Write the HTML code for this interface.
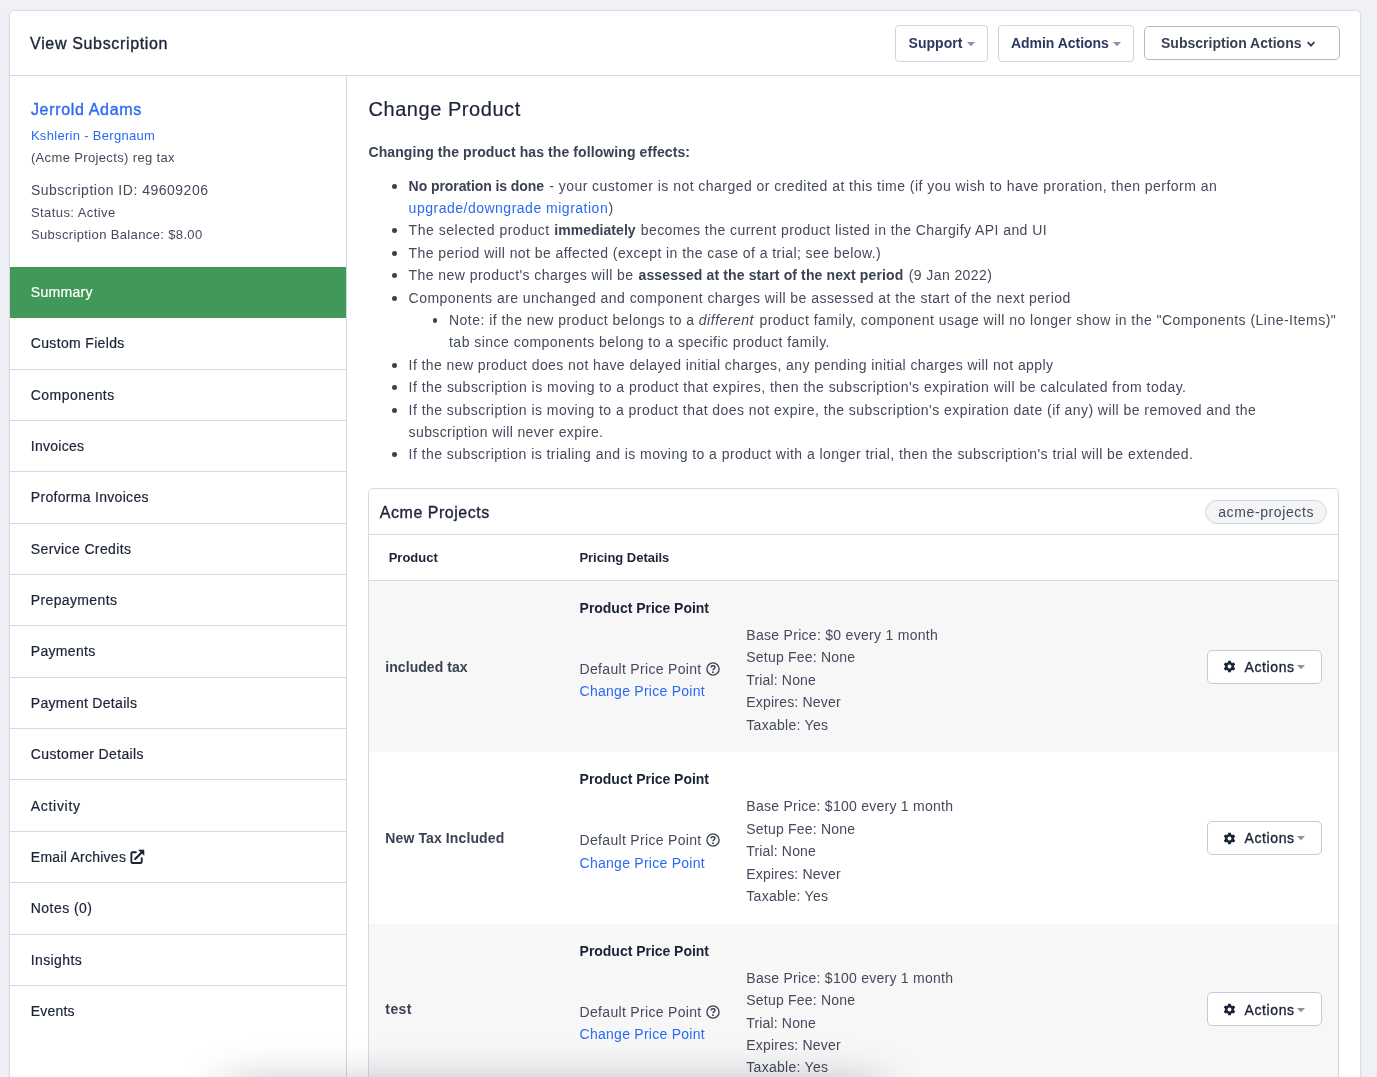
<!DOCTYPE html>
<html lang="en"><head><meta charset="utf-8"><title>View Subscription</title>
<style>
html,body{margin:0;padding:0}
html{overflow:hidden;width:1377px;height:1077px}
body{width:1377px;height:1077px;overflow:hidden;background:#eff1f6;position:relative;font-family:"Liberation Sans",sans-serif;}
.card{position:absolute;left:9px;top:10px;width:1350px;height:1090px;background:#fff;border:1px solid #d9dce4;border-radius:5px;box-shadow:0 1px 3px rgba(30,40,80,.08)}
.wrap{position:absolute;left:0;top:0;width:1377px;height:1077px;will-change:transform}
.t{position:absolute;white-space:pre;line-height:1;}
.hl{position:absolute;height:1px;background:#d6d9e0}
.vl{position:absolute;width:1px;background:#d6d9e0}
.btn{position:absolute;box-sizing:border-box;border:1px solid #cfd3de;border-radius:4px;background:#fff}
.btn.dk{border-color:#b4b9c6;border-radius:5px}
.btn.r5{border-radius:5px;border-color:#c6cad4}
.caret{position:absolute;width:0;height:0;border-left:3.7px solid transparent;border-right:3.7px solid transparent;border-top:4px solid #8b92a6}
.ic{position:absolute;overflow:visible}
.green{position:absolute;background:#409959}
.dot{position:absolute;width:4.7px;height:4.7px;border-radius:50%;background:#3a4152}
.panel{position:absolute;left:368px;top:488px;width:969px;height:640px;border:1px solid #d6d9e2;border-radius:5px;background:#fff}
.row{position:absolute;left:369px;width:969px}
.row.g{background:#f7f7f8}
.badge{position:absolute;box-sizing:border-box;border:1px solid #d3d6de;border-radius:12px;background:#f3f4f6}
.shadow{position:absolute;left:232px;top:1098px;width:640px;height:30px;border-radius:8px;background:#fff;box-shadow:0 0 45px 10px rgba(20,25,40,.36)}
</style></head>
<body>
<div class="card"></div>
<div class="hl" style="left:10px;top:75px;width:1350px"></div>
<div class="vl" style="left:346px;top:76px;height:1010px"></div>
<div class="wrap">
<span class="t" style="left:30.10px;top:36px;font-size:16px;color:#1b2337;letter-spacing:0.657px;-webkit-text-stroke:0.35px #1b2337;">View Subscription</span>
<div class="btn" style="left:895px;top:25px;width:93px;height:37px"></div>
<div class="btn" style="left:998px;top:25px;width:136px;height:37px"></div>
<div class="btn dk" style="left:1144px;top:26px;width:196px;height:34px"></div>
<span class="t" style="left:908.60px;top:36px;font-size:14px;color:#2c3860;letter-spacing:0.024px;font-weight:700;">Support</span>
<span class="t" style="left:1011.00px;top:36px;font-size:14px;color:#2c3860;letter-spacing:-0.039px;font-weight:700;">Admin Actions</span>
<span class="t" style="left:1161.00px;top:36px;font-size:14px;color:#3a4152;letter-spacing:0.012px;font-weight:700;">Subscription Actions</span>
<svg class="ic" style="left:967.00px;top:41.80px" width="8" height="4.2" viewBox="0 0 8 4.2"><path d="M0 0 H8 L4 4.2 Z" fill="#8b92a6"/></svg>
<svg class="ic" style="left:1113.20px;top:41.80px" width="8" height="4.2" viewBox="0 0 8 4.2"><path d="M0 0 H8 L4 4.2 Z" fill="#8b92a6"/></svg>
<svg class="ic" style="left:1306px;top:39.5px" width="10" height="8" viewBox="0 0 10 8"><path d="M1.6 2.2 L5 5.6 L8.4 2.2" fill="none" stroke="#3a4152" stroke-width="1.9"/></svg>
<span class="t" style="left:30.90px;top:102px;font-size:16px;color:#2a6af0;letter-spacing:0.670px;-webkit-text-stroke:0.35px #2a6af0;">Jerrold Adams</span>
<span class="t" style="left:30.90px;top:129px;font-size:13px;color:#2a6af0;letter-spacing:0.306px;">Kshlerin - Bergnaum</span>
<span class="t" style="left:30.90px;top:151px;font-size:13px;color:#434a5b;letter-spacing:0.359px;">(Acme Projects) reg tax</span>
<span class="t" style="left:30.90px;top:183px;font-size:14px;color:#434a5b;letter-spacing:0.504px;">Subscription ID: 49609206</span>
<span class="t" style="left:30.90px;top:206px;font-size:13px;color:#434a5b;letter-spacing:0.433px;">Status: Active</span>
<span class="t" style="left:30.90px;top:228px;font-size:13px;color:#434a5b;letter-spacing:0.362px;">Subscription Balance: $8.00</span>
<div class="green" style="left:10px;top:267px;width:336px;height:51px"></div>
<span class="t" style="left:30.80px;top:285px;font-size:14px;color:#ffffff;letter-spacing:0.302px;-webkit-text-stroke:0.2px #ffffff;">Summary</span>
<div class="hl" style="left:10px;top:369px;width:336px"></div>
<span class="t" style="left:30.80px;top:336px;font-size:14px;color:#1b2337;letter-spacing:0.336px;-webkit-text-stroke:0.2px #1b2337;">Custom Fields</span>
<div class="hl" style="left:10px;top:420px;width:336px"></div>
<span class="t" style="left:30.80px;top:388px;font-size:14px;color:#1b2337;letter-spacing:0.447px;-webkit-text-stroke:0.2px #1b2337;">Components</span>
<div class="hl" style="left:10px;top:471px;width:336px"></div>
<span class="t" style="left:30.80px;top:439px;font-size:14px;color:#1b2337;letter-spacing:0.277px;-webkit-text-stroke:0.2px #1b2337;">Invoices</span>
<div class="hl" style="left:10px;top:523px;width:336px"></div>
<span class="t" style="left:30.80px;top:490px;font-size:14px;color:#1b2337;letter-spacing:0.304px;-webkit-text-stroke:0.2px #1b2337;">Proforma Invoices</span>
<div class="hl" style="left:10px;top:574px;width:336px"></div>
<span class="t" style="left:30.80px;top:542px;font-size:14px;color:#1b2337;letter-spacing:0.377px;-webkit-text-stroke:0.2px #1b2337;">Service Credits</span>
<div class="hl" style="left:10px;top:625px;width:336px"></div>
<span class="t" style="left:30.80px;top:593px;font-size:14px;color:#1b2337;letter-spacing:0.362px;-webkit-text-stroke:0.2px #1b2337;">Prepayments</span>
<div class="hl" style="left:10px;top:677px;width:336px"></div>
<span class="t" style="left:30.80px;top:644px;font-size:14px;color:#1b2337;letter-spacing:0.307px;-webkit-text-stroke:0.2px #1b2337;">Payments</span>
<div class="hl" style="left:10px;top:728px;width:336px"></div>
<span class="t" style="left:30.80px;top:696px;font-size:14px;color:#1b2337;letter-spacing:0.304px;-webkit-text-stroke:0.2px #1b2337;">Payment Details</span>
<div class="hl" style="left:10px;top:779px;width:336px"></div>
<span class="t" style="left:30.80px;top:747px;font-size:14px;color:#1b2337;letter-spacing:0.356px;-webkit-text-stroke:0.2px #1b2337;">Customer Details</span>
<div class="hl" style="left:10px;top:831px;width:336px"></div>
<span class="t" style="left:30.80px;top:799px;font-size:14px;color:#1b2337;letter-spacing:0.694px;-webkit-text-stroke:0.2px #1b2337;">Activity</span>
<div class="hl" style="left:10px;top:882px;width:336px"></div>
<span class="t" style="left:30.80px;top:850px;font-size:14px;color:#1b2337;letter-spacing:0.253px;-webkit-text-stroke:0.2px #1b2337;">Email Archives</span>
<div class="hl" style="left:10px;top:934px;width:336px"></div>
<span class="t" style="left:30.80px;top:901px;font-size:14px;color:#1b2337;letter-spacing:0.440px;-webkit-text-stroke:0.2px #1b2337;">Notes (0)</span>
<div class="hl" style="left:10px;top:985px;width:336px"></div>
<span class="t" style="left:30.80px;top:953px;font-size:14px;color:#1b2337;letter-spacing:0.379px;-webkit-text-stroke:0.2px #1b2337;">Insights</span>
<span class="t" style="left:30.80px;top:1004px;font-size:14px;color:#1b2337;letter-spacing:0.181px;-webkit-text-stroke:0.2px #1b2337;">Events</span>
<svg class="ic" style="left:129.6px;top:849.2px" width="15.2" height="15.2" viewBox="0 0 15.2 15.2"><path d="M5.9 3.25 H2.6 Q1.35 3.25 1.35 4.5 V12.7 Q1.35 13.95 2.6 13.95 H10.5 Q11.75 13.95 11.75 12.7 V9.2" fill="none" stroke="#1b2337" stroke-width="1.9" stroke-linecap="round"/><path d="M5.2 10.0 L11.9 3.2" fill="none" stroke="#1b2337" stroke-width="2.2" stroke-linecap="round"/><path d="M8.7 1.0 H14.0 V6.3 Z" fill="#1b2337" stroke="#1b2337" stroke-width="0.6" stroke-linejoin="round"/></svg>
<span class="t" style="left:368.50px;top:99px;font-size:20px;color:#1b2337;letter-spacing:0.550px;-webkit-text-stroke:0.2px #1b2337;">Change Product</span>
<span class="t" style="left:368.50px;top:145px;font-size:14px;color:#3a4152;letter-spacing:0.091px;font-weight:700;">Changing the product has the following effects:</span>
<div class="dot" style="left:392.15px;top:184.25px"></div>
<span class="t" style="left:408.60px;top:179px;font-size:14px;color:#3a4152;letter-spacing:-0.073px;font-weight:700;">No proration is done</span>
<span class="t" style="left:549.20px;top:179px;font-size:14px;color:#434a5b;letter-spacing:0.464px;">- your customer is not charged or credited at this time (if you wish to have proration, then perform an</span>
<span class="t" style="left:408.60px;top:201px;font-size:14px;color:#2a6af0;letter-spacing:0.503px;">upgrade/downgrade migration</span>
<span class="t" style="left:608.40px;top:201px;font-size:14px;color:#434a5b;letter-spacing:0.000px;">)</span>
<div class="dot" style="left:392.15px;top:228.25px"></div>
<span class="t" style="left:408.60px;top:223px;font-size:14px;color:#434a5b;letter-spacing:0.518px;">The selected product</span>
<span class="t" style="left:554.30px;top:223px;font-size:14px;color:#3a4152;letter-spacing:0.038px;font-weight:700;">immediately</span>
<span class="t" style="left:640.70px;top:223px;font-size:14px;color:#434a5b;letter-spacing:0.436px;">becomes the current product listed in the Chargify API and UI</span>
<div class="dot" style="left:392.15px;top:251.25px"></div>
<span class="t" style="left:408.60px;top:246px;font-size:14px;color:#434a5b;letter-spacing:0.431px;">The period will not be affected (except in the case of a trial; see below.)</span>
<div class="dot" style="left:392.15px;top:273.25px"></div>
<span class="t" style="left:408.60px;top:268px;font-size:14px;color:#434a5b;letter-spacing:0.439px;">The new product's charges will be</span>
<span class="t" style="left:638.50px;top:268px;font-size:14px;color:#3a4152;letter-spacing:0.124px;font-weight:700;">assessed at the start of the next period</span>
<span class="t" style="left:908.80px;top:268px;font-size:14px;color:#434a5b;letter-spacing:0.399px;">(9 Jan 2022)</span>
<div class="dot" style="left:392.15px;top:296.25px"></div>
<span class="t" style="left:408.60px;top:291px;font-size:14px;color:#434a5b;letter-spacing:0.457px;">Components are unchanged and component charges will be assessed at the start of the next period</span>
<div class="dot" style="left:432.65px;top:318.25px"></div>
<span class="t" style="left:449.00px;top:313px;font-size:14px;color:#434a5b;letter-spacing:0.474px;">Note: if the new product belongs to a</span>
<span class="t" style="left:698.80px;top:313px;font-size:14px;color:#434a5b;letter-spacing:0.515px;font-style:italic;">different</span>
<span class="t" style="left:759.40px;top:313px;font-size:14px;color:#434a5b;letter-spacing:0.471px;">product family, component usage will no longer show in the "Components (Line-Items)"</span>
<span class="t" style="left:449.00px;top:335px;font-size:14px;color:#434a5b;letter-spacing:0.476px;">tab since components belong to a specific product family.</span>
<div class="dot" style="left:392.15px;top:363.25px"></div>
<span class="t" style="left:408.60px;top:358px;font-size:14px;color:#434a5b;letter-spacing:0.417px;">If the new product does not have delayed initial charges, any pending initial charges will not apply</span>
<div class="dot" style="left:392.15px;top:385.25px"></div>
<span class="t" style="left:408.60px;top:380px;font-size:14px;color:#434a5b;letter-spacing:0.469px;">If the subscription is moving to a product that expires, then the subscription's expiration will be calculated from today.</span>
<div class="dot" style="left:392.15px;top:408.25px"></div>
<span class="t" style="left:408.60px;top:403px;font-size:14px;color:#434a5b;letter-spacing:0.459px;">If the subscription is moving to a product that does not expire, the subscription's expiration date (if any) will be removed and the</span>
<span class="t" style="left:408.60px;top:425px;font-size:14px;color:#434a5b;letter-spacing:0.385px;">subscription will never expire.</span>
<div class="dot" style="left:392.15px;top:452.25px"></div>
<span class="t" style="left:408.60px;top:447px;font-size:14px;color:#434a5b;letter-spacing:0.448px;">If the subscription is trialing and is moving to a product with a longer trial, then the subscription's trial will be extended.</span>
<div class="panel"></div>
<div class="row g" style="top:581px;height:171px"></div>
<div class="row g" style="top:924px;height:160px"></div>
<div class="hl" style="left:369px;top:534px;width:969px"></div>
<div class="hl" style="left:369px;top:580px;width:969px"></div>
<span class="t" style="left:379.80px;top:505px;font-size:16px;color:#1b2337;letter-spacing:0.530px;-webkit-text-stroke:0.35px #1b2337;">Acme Projects</span>
<div class="badge" style="left:1205px;top:500px;width:122px;height:24px"></div>
<span class="t" style="left:1218.20px;top:505px;font-size:14px;color:#434a5b;letter-spacing:0.615px;">acme-projects</span>
<span class="t" style="left:388.70px;top:551px;font-size:13px;color:#1b2337;letter-spacing:-0.002px;font-weight:700;">Product</span>
<span class="t" style="left:579.40px;top:551px;font-size:13px;color:#1b2337;letter-spacing:-0.029px;font-weight:700;">Pricing Details</span>
<span class="t" style="left:579.60px;top:601px;font-size:14px;color:#1b2337;letter-spacing:-0.028px;font-weight:700;">Product Price Point</span>
<span class="t" style="left:385.30px;top:660px;font-size:14px;color:#3a4152;letter-spacing:0.056px;font-weight:700;">included tax</span>
<span class="t" style="left:579.60px;top:662px;font-size:14px;color:#434a5b;letter-spacing:0.315px;">Default Price Point</span>
<span class="t" style="left:579.60px;top:684px;font-size:14px;color:#2a6af0;letter-spacing:0.257px;">Change Price Point</span>
<svg class="ic" style="left:706.2px;top:661.70px" width="14" height="14" viewBox="0 0 14 14"><circle cx="7" cy="7" r="6.1" fill="none" stroke="#3a4152" stroke-width="1.35"/><path d="M4.95 5.55 Q5.05 3.75 7 3.75 Q8.95 3.75 8.95 5.35 Q8.95 6.3 7.9 6.9 Q7 7.4 7 8.3" fill="none" stroke="#3a4152" stroke-width="1.45"/><circle cx="7" cy="10.15" r="0.95" fill="#3a4152"/></svg>
<span class="t" style="left:746.30px;top:628px;font-size:14px;color:#434a5b;letter-spacing:0.291px;">Base Price: $0 every 1 month</span>
<span class="t" style="left:746.30px;top:650px;font-size:14px;color:#434a5b;letter-spacing:0.204px;">Setup Fee: None</span>
<span class="t" style="left:746.30px;top:673px;font-size:14px;color:#434a5b;letter-spacing:0.155px;">Trial: None</span>
<span class="t" style="left:746.30px;top:695px;font-size:14px;color:#434a5b;letter-spacing:0.191px;">Expires: Never</span>
<span class="t" style="left:746.30px;top:718px;font-size:14px;color:#434a5b;letter-spacing:0.280px;">Taxable: Yes</span>
<div class="btn r5" style="left:1207px;top:649.60px;width:115px;height:34px"></div>
<svg class="ic" style="left:1223.4px;top:660.10px" width="13" height="13" viewBox="-6.5 -6.5 13 13"><path d="M-1.50 -4.24 L-1.31 -5.86 L1.31 -5.86 L1.50 -4.24 L2.92 -3.42 L4.42 -4.06 L5.73 -1.79 L4.42 -0.82 L4.42 0.82 L5.73 1.79 L4.42 4.06 L2.92 3.42 L1.50 4.24 L1.31 5.86 L-1.31 5.86 L-1.50 4.24 L-2.92 3.42 L-4.42 4.06 L-5.73 1.79 L-4.42 0.82 L-4.42 -0.82 L-5.73 -1.79 L-4.42 -4.06 L-2.92 -3.42 Z M1.95 0 A1.95 1.95 0 1 0 -1.95 0 A1.95 1.95 0 1 0 1.95 0 Z" fill="#1b2337" fill-rule="evenodd"/></svg>
<span class="t" style="left:1244.50px;top:660px;font-size:14px;color:#1b2337;letter-spacing:0.616px;-webkit-text-stroke:0.35px #1b2337;">Actions</span>
<svg class="ic" style="left:1297.40px;top:664.80px" width="8" height="4.2" viewBox="0 0 8 4.2"><path d="M0 0 H8 L4 4.2 Z" fill="#8b92a6"/></svg>
<span class="t" style="left:579.60px;top:772px;font-size:14px;color:#1b2337;letter-spacing:-0.028px;font-weight:700;">Product Price Point</span>
<span class="t" style="left:385.30px;top:831px;font-size:14px;color:#3a4152;letter-spacing:0.113px;font-weight:700;">New Tax Included</span>
<span class="t" style="left:579.60px;top:833px;font-size:14px;color:#434a5b;letter-spacing:0.315px;">Default Price Point</span>
<span class="t" style="left:579.60px;top:856px;font-size:14px;color:#2a6af0;letter-spacing:0.257px;">Change Price Point</span>
<svg class="ic" style="left:706.2px;top:833.10px" width="14" height="14" viewBox="0 0 14 14"><circle cx="7" cy="7" r="6.1" fill="none" stroke="#3a4152" stroke-width="1.35"/><path d="M4.95 5.55 Q5.05 3.75 7 3.75 Q8.95 3.75 8.95 5.35 Q8.95 6.3 7.9 6.9 Q7 7.4 7 8.3" fill="none" stroke="#3a4152" stroke-width="1.45"/><circle cx="7" cy="10.15" r="0.95" fill="#3a4152"/></svg>
<span class="t" style="left:746.30px;top:799px;font-size:14px;color:#434a5b;letter-spacing:0.258px;">Base Price: $100 every 1 month</span>
<span class="t" style="left:746.30px;top:822px;font-size:14px;color:#434a5b;letter-spacing:0.204px;">Setup Fee: None</span>
<span class="t" style="left:746.30px;top:844px;font-size:14px;color:#434a5b;letter-spacing:0.155px;">Trial: None</span>
<span class="t" style="left:746.30px;top:867px;font-size:14px;color:#434a5b;letter-spacing:0.191px;">Expires: Never</span>
<span class="t" style="left:746.30px;top:889px;font-size:14px;color:#434a5b;letter-spacing:0.280px;">Taxable: Yes</span>
<div class="btn r5" style="left:1207px;top:821.00px;width:115px;height:34px"></div>
<svg class="ic" style="left:1223.4px;top:831.50px" width="13" height="13" viewBox="-6.5 -6.5 13 13"><path d="M-1.50 -4.24 L-1.31 -5.86 L1.31 -5.86 L1.50 -4.24 L2.92 -3.42 L4.42 -4.06 L5.73 -1.79 L4.42 -0.82 L4.42 0.82 L5.73 1.79 L4.42 4.06 L2.92 3.42 L1.50 4.24 L1.31 5.86 L-1.31 5.86 L-1.50 4.24 L-2.92 3.42 L-4.42 4.06 L-5.73 1.79 L-4.42 0.82 L-4.42 -0.82 L-5.73 -1.79 L-4.42 -4.06 L-2.92 -3.42 Z M1.95 0 A1.95 1.95 0 1 0 -1.95 0 A1.95 1.95 0 1 0 1.95 0 Z" fill="#1b2337" fill-rule="evenodd"/></svg>
<span class="t" style="left:1244.50px;top:831px;font-size:14px;color:#1b2337;letter-spacing:0.616px;-webkit-text-stroke:0.35px #1b2337;">Actions</span>
<svg class="ic" style="left:1297.40px;top:836.20px" width="8" height="4.2" viewBox="0 0 8 4.2"><path d="M0 0 H8 L4 4.2 Z" fill="#8b92a6"/></svg>
<span class="t" style="left:579.60px;top:944px;font-size:14px;color:#1b2337;letter-spacing:-0.028px;font-weight:700;">Product Price Point</span>
<span class="t" style="left:385.30px;top:1002px;font-size:14px;color:#3a4152;letter-spacing:0.436px;font-weight:700;">test</span>
<span class="t" style="left:579.60px;top:1005px;font-size:14px;color:#434a5b;letter-spacing:0.315px;">Default Price Point</span>
<span class="t" style="left:579.60px;top:1027px;font-size:14px;color:#2a6af0;letter-spacing:0.257px;">Change Price Point</span>
<svg class="ic" style="left:706.2px;top:1004.50px" width="14" height="14" viewBox="0 0 14 14"><circle cx="7" cy="7" r="6.1" fill="none" stroke="#3a4152" stroke-width="1.35"/><path d="M4.95 5.55 Q5.05 3.75 7 3.75 Q8.95 3.75 8.95 5.35 Q8.95 6.3 7.9 6.9 Q7 7.4 7 8.3" fill="none" stroke="#3a4152" stroke-width="1.45"/><circle cx="7" cy="10.15" r="0.95" fill="#3a4152"/></svg>
<span class="t" style="left:746.30px;top:971px;font-size:14px;color:#434a5b;letter-spacing:0.258px;">Base Price: $100 every 1 month</span>
<span class="t" style="left:746.30px;top:993px;font-size:14px;color:#434a5b;letter-spacing:0.204px;">Setup Fee: None</span>
<span class="t" style="left:746.30px;top:1016px;font-size:14px;color:#434a5b;letter-spacing:0.155px;">Trial: None</span>
<span class="t" style="left:746.30px;top:1038px;font-size:14px;color:#434a5b;letter-spacing:0.191px;">Expires: Never</span>
<span class="t" style="left:746.30px;top:1060px;font-size:14px;color:#434a5b;letter-spacing:0.280px;">Taxable: Yes</span>
<div class="btn r5" style="left:1207px;top:992.40px;width:115px;height:34px"></div>
<svg class="ic" style="left:1223.4px;top:1002.90px" width="13" height="13" viewBox="-6.5 -6.5 13 13"><path d="M-1.50 -4.24 L-1.31 -5.86 L1.31 -5.86 L1.50 -4.24 L2.92 -3.42 L4.42 -4.06 L5.73 -1.79 L4.42 -0.82 L4.42 0.82 L5.73 1.79 L4.42 4.06 L2.92 3.42 L1.50 4.24 L1.31 5.86 L-1.31 5.86 L-1.50 4.24 L-2.92 3.42 L-4.42 4.06 L-5.73 1.79 L-4.42 0.82 L-4.42 -0.82 L-5.73 -1.79 L-4.42 -4.06 L-2.92 -3.42 Z M1.95 0 A1.95 1.95 0 1 0 -1.95 0 A1.95 1.95 0 1 0 1.95 0 Z" fill="#1b2337" fill-rule="evenodd"/></svg>
<span class="t" style="left:1244.50px;top:1003px;font-size:14px;color:#1b2337;letter-spacing:0.616px;-webkit-text-stroke:0.35px #1b2337;">Actions</span>
<svg class="ic" style="left:1297.40px;top:1007.60px" width="8" height="4.2" viewBox="0 0 8 4.2"><path d="M0 0 H8 L4 4.2 Z" fill="#8b92a6"/></svg>
</div>
<div class="shadow"></div>
</body></html>
